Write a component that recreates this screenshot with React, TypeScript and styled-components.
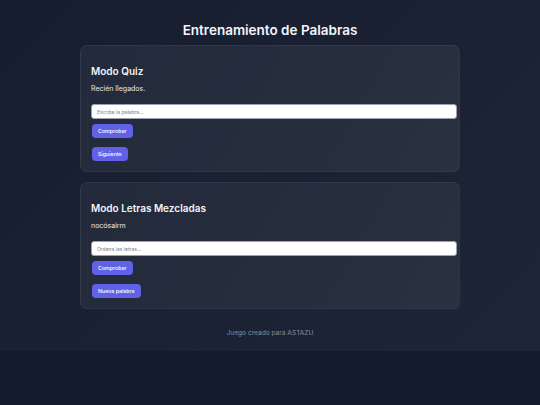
import React from "react";
import styled, { createGlobalStyle } from "styled-components";

const Global = createGlobalStyle`
  html { background: #141b2c; }
  body {
    margin: 0;
    font-family: Inter, "Noto Sans", sans-serif;
    color: #f1f3f7;
  }
  * { box-sizing: border-box; }
`;

const Page = styled.div`
  background: linear-gradient(135deg, #161d2f 0%, #1b2234 60%, #1e2537 100%);
  display: flex;
  flex-direction: column;
  align-items: center;
  padding: 20px 0 12px;
`;

const Title = styled.h1`
  margin: 0;
  font-size: 13.5px;
  line-height: 20px;
  font-weight: 600;
  color: #f4f6fa;
`;

const Card = styled.section`
  width: 380px;
  margin-top: 5px;
  margin-bottom: 5px;
  padding: 19px 2px 10px 10px;
  border-radius: 7px;
  background: linear-gradient(120deg, #232a3b 0%, #262d3d 60%, #2a3141 100%);
  border: 1px solid rgba(255, 255, 255, 0.05);
  display: flex;
  flex-direction: column;
  align-items: flex-start;
`;

const Heading = styled.h2`
  margin: 0;
  font-size: 10px;
  line-height: 13px;
  font-weight: 600;
  color: #f2f4f8;
`;

const Text = styled.p`
  margin: 6px 0 0;
  font-size: 7px;
  line-height: 10px;
  color: #e6e9ef;
`;

const Input = styled.input`
  margin-top: 10px;
  width: 100%;
  height: 15px;
  padding: 0 5px;
  border: 1px solid #9aa0ad;
  border-radius: 3px;
  background: #ffffff;
  font-family: Inter, "Noto Sans", sans-serif;
  font-size: 5px;
  color: #333;
  outline: none;
  &::placeholder { color: #7a7f8a; }
`;

const Button = styled.button<{ $gap: number }>`
  margin-top: ${(p) => p.$gap}px;
  margin-left: 1px;
  height: 14px;
  padding: 0 6px;
  border: none;
  border-radius: 4px;
  background: #6161e8;
  color: #ffffff;
  font-family: Inter, "Noto Sans", sans-serif;
  font-size: 5.3px;
  font-weight: 500;
`;

const Footer = styled.footer`
  margin-top: 13px;
  font-size: 6.6px;
  line-height: 12px;
  color: #878d9b;
`;

export default function App() {
  return (
    <>
      <Global />
      <Page>
        <Title>Entrenamiento de Palabras</Title>
        <Card>
          <Heading>Modo Quiz</Heading>
          <Text>Recién llegados.</Text>
          <Input placeholder="Escribe la palabra..." />
          <Button $gap={5}>Comprobar</Button>
          <Button $gap={9}>Siguiente</Button>
        </Card>
        <Card>
          <Heading>Modo Letras Mezcladas</Heading>
          <Text>nocósairm</Text>
          <Input placeholder="Ordena las letras..." />
          <Button $gap={5}>Comprobar</Button>
          <Button $gap={9}>Nueva palabra</Button>
        </Card>
        <Footer>Juego creado para ASTAZU</Footer>
      </Page>
    </>
  );
}
